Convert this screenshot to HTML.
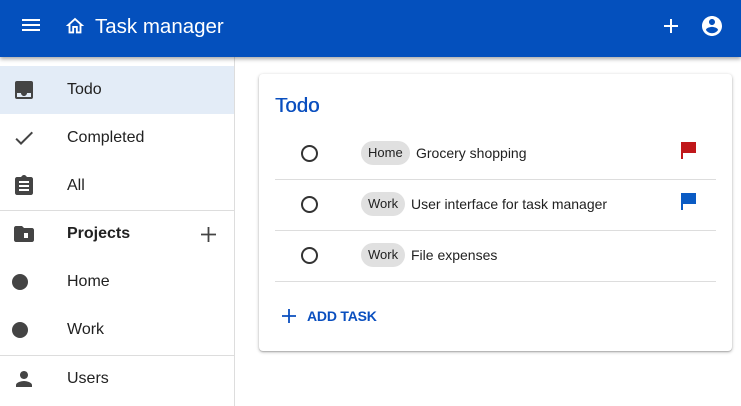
<!DOCTYPE html>
<html><head><meta charset="utf-8"><style>
*{box-sizing:border-box;margin:0;padding:0}
body{width:741px;height:406px;overflow:hidden;background:#fff;font-family:"Liberation Sans",sans-serif;color:#212121;position:relative}
.hdr{position:absolute;left:0;top:0;width:741px;height:57px;background:#0450bd;box-shadow:0 2px 4px rgba(0,0,0,.35);z-index:2}
.hdr .t{position:absolute;left:95px;top:15px;font-size:20.5px;color:#fff}
.side{position:absolute;left:0;top:57px;width:235px;height:349px;border-right:1px solid #ddd}
.it{position:absolute;left:0;width:234px;height:48px}
.it span{position:absolute;left:67px;top:15px;font-size:16px}
.it svg{position:absolute;left:12px;top:12px}
.dv{position:absolute;left:0;width:234px;height:1px;background:#ddd}
.card{position:absolute;left:259px;top:74px;width:473px;height:277px;border-radius:4px;box-shadow:0 1px 3px rgba(0,0,0,.3),0 1px 1px rgba(0,0,0,.14)}
.title{position:absolute;left:16px;top:20px;font-size:20.5px;color:#0a4fbf;text-shadow:0.4px 0 0 #0a4fbf}
.row{position:absolute;left:16px;width:441px;height:51px;border-bottom:1px solid #ddd}
.radio{position:absolute;left:26px;width:17px;height:17px;border:2px solid #333;border-radius:50%}
.chip{position:absolute;left:86px;height:24px;border-radius:12px;background:#e0e0e0;font-size:13px;padding:0 7px;line-height:24px}
.txt{position:absolute;font-size:14px}
.add{position:absolute;top:234px;font-size:14px;color:#0a4fbf;font-weight:bold;letter-spacing:-.2px}
</style></head><body>
<div class="hdr">
<svg style="position:absolute;left:21px;top:17px" width="20" height="16"><path d="M1 3h18M1 8h18M1 13h18" stroke="#fff" stroke-width="2"/></svg>
<svg style="position:absolute;left:64px;top:15px" width="22" height="22" viewBox="0 0 24 24"><path fill="#fff" d="M12 5.69l5 4.5V18h-2v-6H9v6H7v-7.81l5-4.5M12 3L2 12h3v8h6v-6h2v6h6v-8h3L12 3z"/></svg>
<div class="t">Task manager</div>
<svg style="position:absolute;left:662px;top:17px" width="18" height="18"><path d="M9 2v14M2 9h14" stroke="#fff" stroke-width="2"/></svg>
<svg style="position:absolute;left:700px;top:14px" width="24" height="24" viewBox="0 0 24 24"><path fill="#fff" d="M12 2C6.48 2 2 6.48 2 12s4.48 10 10 10 10-4.48 10-10S17.52 2 12 2zm0 3c1.66 0 3 1.34 3 3s-1.34 3-3 3-3-1.34-3-3 1.34-3 3-3zm0 14.2c-2.5 0-4.71-1.28-6-3.22.03-1.99 4-3.08 6-3.08 1.99 0 5.970 1.09 6 3.08-1.29 1.94-3.5 3.22-6 3.22z"/></svg>
</div>
<div class="side">
<div class="it" style="top:9px;background:#e3ecf7"><svg width="24" height="24" viewBox="0 0 24 24"><rect x="3" y="3" width="18" height="18" rx="2" fill="#444"/><path d="M5 15h4c0 1.66 1.34 3 3 3s3-1.34 3-3h4v4H5z" fill="#e3ecf7"/></svg><span>Todo</span></div>
<div class="it" style="top:57px"><svg width="24" height="24" viewBox="0 0 24 24"><path fill="#444" d="M9 16.17L4.83 12l-1.42 1.41L9 19 21 7l-1.41-1.41z"/></svg><span>Completed</span></div>
<div class="it" style="top:105px"><svg width="24" height="24" viewBox="0 0 24 24"><path fill="#444" d="M19 3h-4.18C14.4 1.84 13.3 1 12 1s-2.4.84-2.82 2H5c-1.1 0-2 .9-2 2v14c0 1.1.9 2 2 2h14c1.1 0 2-.9 2-2V5c0-1.1-.9-2-2-2zm-2 14H7v-2h10v2zm0-4H7v-2h10v2zm0-4H7V7h10v2z"/></svg><span>All</span></div>
<div class="dv" style="top:153px"></div>
<div class="it" style="top:153px"><svg width="24" height="24" viewBox="0 0 24 24"><path fill="#444" d="M20 6h-8l-2-2H4c-1.1 0-2 .9-2 2v12c0 1.1.9 2 2 2h16c1.1 0 2-.9 2-2V8c0-1.1-.9-2-2-2z"/><rect x="12" y="11" width="4" height="5" fill="#fff"/></svg><span style="font-weight:bold">Projects</span>
<svg style="left:200px;top:16px" width="17" height="17"><path d="M8.5 1v15M1 8.5h15" stroke="#444" stroke-width="1.8"/></svg></div>
<div class="it" style="top:201px"><svg width="24" height="24"><circle cx="8" cy="12" r="8" fill="#444"/></svg><span>Home</span></div>
<div class="it" style="top:249px"><svg width="24" height="24"><circle cx="8" cy="12" r="8" fill="#444"/></svg><span>Work</span></div>
<div class="dv" style="top:298px"></div>
<div class="it" style="top:298px"><svg width="24" height="24" viewBox="0 0 24 24"><path fill="#444" d="M12 12c2.21 0 4-1.790 4-4s-1.79-4-4-4-4 1.79-4 4 1.79 4 4 4zm0 2c-2.67 0-8 1.34-8 4v2h16v-2c0-2.66-5.33-4-8-4z"/></svg><span>Users</span></div>
</div>
<div class="card">
<div class="title">Todo</div>
<div class="row" style="top:55px"><div class="radio" style="top:16px"></div><div class="chip" style="top:12px">Home</div><div class="txt" style="left:141px;top:16px">Grocery shopping</div>
<svg style="position:absolute;left:405px;top:13px" width="16" height="18"><path d="M1 0h15v11H3v6H1z" fill="#c0171a"/></svg></div>
<div class="row" style="top:106px"><div class="radio" style="top:16px"></div><div class="chip" style="top:12px">Work</div><div class="txt" style="left:136px;top:16px">User interface for task manager</div>
<svg style="position:absolute;left:405px;top:13px" width="16" height="18"><path d="M1 0h15v11H3v6H1z" fill="#0a5bc4"/></svg></div>
<div class="row" style="top:157px"><div class="radio" style="top:16px"></div><div class="chip" style="top:12px">Work</div><div class="txt" style="left:136px;top:16px">File expenses</div></div>
<svg style="position:absolute;left:23px;top:235px" width="14" height="14"><path d="M7 0v14M0 7h14" stroke="#0a4fbf" stroke-width="1.8"/></svg>
<div class="add" style="left:48px">ADD TASK</div>
</div>
</body></html>
